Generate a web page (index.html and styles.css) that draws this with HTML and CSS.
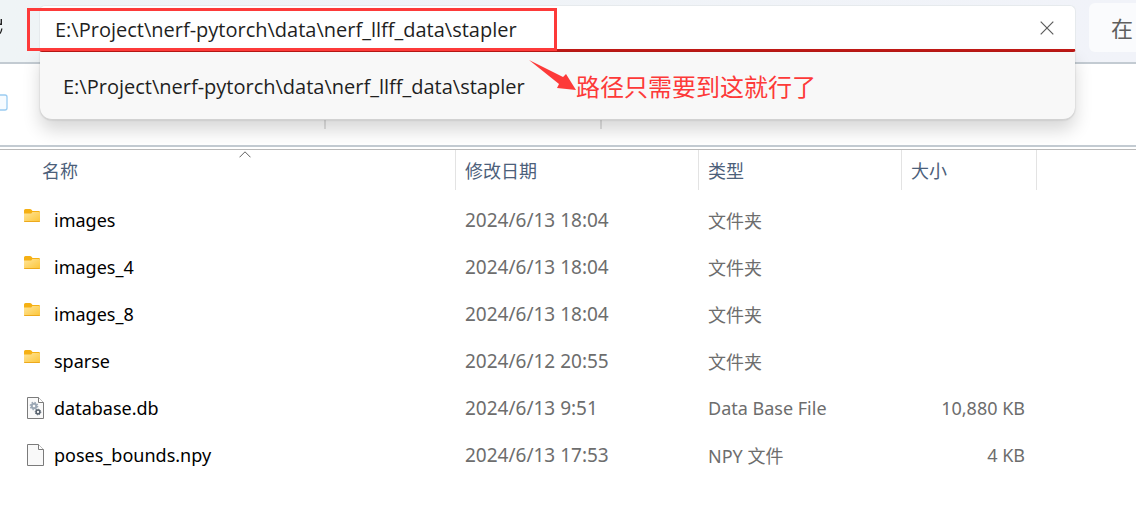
FILE: index.html
```
<!DOCTYPE html>
<html lang="zh-CN">
<head>
  <meta charset="UTF-8" />
  <meta name="viewport" content="width=device-width, initial-scale=1.0">
  <title>stapler</title>
  <link rel="stylesheet" href="styles.css">
</head>
<body>

  <!-- icons used by the file rows -->
  <svg class="sprite" aria-hidden="true">
    <defs>
      <linearGradient id="folder-fill" x1="0" y1="0" x2="1" y2="1">
        <stop offset="0" stop-color="#ffe59a" />
        <stop offset="1" stop-color="#fcc537" />
      </linearGradient>
    </defs>
    <symbol id="icon-folder" viewBox="0 0 16 13">
      <path d="M0 1.500Q0 0 1.500 0H6Q6.800 0 7.300 .6L8.500 2H14.800Q16 2 16 3.200V6H0Z" fill="#f5b013" />
      <path d="M0 4.500H6.500Q7.200 4.500 7.700 3.900L8.300 3H15Q16 3 16 4V11.800Q16 13 14.800 13H1.200Q0 13 0 11.800Z" fill="url(#folder-fill)" />
      <path d="M.2 12.500H15.800" stroke="#eda91c" />
    </symbol>
    <symbol id="icon-file" viewBox="0 0 17 22">
      <path d="M.5 .5H11.500L16.500 5.500V21.500H.5Z" fill="#f9f9f9" stroke="#7b7b7b" />
      <path d="M11.500 .5V5.500H16.500" fill="#fff" stroke="#7b7b7b" />
    </symbol>
    <symbol id="icon-db" viewBox="0 0 17 22">
      <use href="#icon-file" width="17" height="22" />
      <circle cx="7" cy="9" r="2.300" fill="none" stroke="#9ba7b4" stroke-width="2" />
      <circle cx="7" cy="9" r="3.600" fill="none" stroke="#9ba7b4" stroke-width="1.500" stroke-dasharray="1.410 1.417" />
      <circle cx="11" cy="15" r="1.900" fill="none" stroke="#56616d" stroke-width="1.500" />
      <circle cx="11" cy="15" r="2.800" fill="none" stroke="#56616d" stroke-width="1" stroke-dasharray="1.100 1.099" />
    </symbol>
  </svg>

  <header class="topbar">
    <button class="refresh" type="button" aria-label="刷新">
      <svg width="3" height="18" viewBox="0 0 3 18">
        <path d="M1.300 1V6.300H0M0 15.500Q1.500 13.500 1.800 10.500" fill="none" stroke="#222" stroke-width="1.400" />
      </svg>
    </button>

    <div class="address">
      <input class="address-input" type="text" aria-label="地址" value="E:\Project\nerf-pytorch\data\nerf_llff_data\stapler">
      <button class="clear" type="button" aria-label="清除">
        <svg width="14" height="14" viewBox="0 0 14 14">
          <path d="M.7 .7L13.300 13.300M13.300 .7L.7 13.300" stroke="#5c5c5c" stroke-width="1.200" />
        </svg>
      </button>
      <div class="suggestions">
        <a class="suggestion" href="#">E:\Project\nerf-pytorch\data\nerf_llff_data\stapler</a>
      </div>
      <div class="mark-box"></div>
      <div class="mark-note">
        <svg class="mark-arrow" width="47" height="31" viewBox="0 0 47 31">
          <path d="M0 0L34 17L37 14L47 30L28 28L30 24Z" fill="#fd3a39" />
        </svg>
        <span>路径只需要到这就行了</span>
      </div>
    </div>

    <input class="search" type="text" aria-label="搜索" placeholder="在">
  </header>

  <div class="toolbar">
    <button class="tool" type="button" aria-label="重命名">
      <svg width="8" height="18" viewBox="0 0 8 18">
        <path d="M0 1H5Q7 1 7 3V14Q7 16 5 16H0" fill="#f6fbff" stroke="#9acbf1" stroke-width="1.300" />
      </svg>
    </button>
    <span class="divider"></span>
    <span class="divider"></span>
  </div>

  <main>
    <table class="files">
      <colgroup>
        <col class="col-name">
        <col class="col-date">
        <col class="col-type">
        <col class="col-size">
        <col>
      </colgroup>
      <thead>
        <tr>
          <th class="name">
            <svg class="sort" width="12" height="7" viewBox="0 0 12 7">
              <path d="M.5 6.300L6 .8L11.500 6.300" fill="none" stroke="#5f5f5f" />
            </svg>
            名称
          </th>
          <th>修改日期</th>
          <th>类型</th>
          <th>大小</th>
          <td></td>
        </tr>
      </thead>
      <tbody>
        <tr>
          <td class="name"><div class="entry"><svg class="folder"><use href="#icon-folder" /></svg>images</div></td>
          <td class="date">2024/6/13 18:04</td>
          <td>文件夹</td>
          <td class="size"></td>
          <td></td>
        </tr>
        <tr>
          <td class="name"><div class="entry"><svg class="folder"><use href="#icon-folder" /></svg>images_4</div></td>
          <td class="date">2024/6/13 18:04</td>
          <td>文件夹</td>
          <td class="size"></td>
          <td></td>
        </tr>
        <tr>
          <td class="name"><div class="entry"><svg class="folder"><use href="#icon-folder" /></svg>images_8</div></td>
          <td class="date">2024/6/13 18:04</td>
          <td>文件夹</td>
          <td class="size"></td>
          <td></td>
        </tr>
        <tr>
          <td class="name"><div class="entry"><svg class="folder"><use href="#icon-folder" /></svg>sparse</div></td>
          <td class="date">2024/6/12 20:55</td>
          <td>文件夹</td>
          <td class="size"></td>
          <td></td>
        </tr>
        <tr>
          <td class="name"><div class="entry"><svg class="file"><use href="#icon-db" /></svg>database.db</div></td>
          <td class="date">2024/6/13 9:51</td>
          <td>Data Base File</td>
          <td class="size">10,880 KB</td>
          <td></td>
        </tr>
        <tr>
          <td class="name"><div class="entry"><svg class="file"><use href="#icon-file" /></svg>poses_bounds.npy</div></td>
          <td class="date">2024/6/13 17:53</td>
          <td>NPY 文件</td>
          <td class="size">4 KB</td>
          <td></td>
        </tr>
      </tbody>
    </table>
  </main>

</body>
</html>
```
FILE: styles.css
```
* {
  box-sizing: border-box;
}

body {
  margin: 0;
  background-color: #fff;
  color: #6d6d6d;
  font-family: "Noto Sans", "Noto Sans CJK SC", sans-serif;
  font-size: 18px;
  overflow-x: hidden;
}

button {
  padding: 0;
  border: none;
  background: none;
}

button svg {
  display: block;
}

.sprite {
  position: absolute;
  width: 0;
  height: 0;
}

/* top bar */
.topbar {
  display: flex;
  align-items: flex-start;
  height: 64px;
  background: linear-gradient(90deg, #eff4f6, #f1f3f9);
  border-bottom: 2px solid #c3cbd2;
}

.refresh {
  width: 39px;
  padding-top: 18px;
}

.address {
  position: relative;
  flex: 1;
  display: flex;
  align-items: center;
  height: 47px;
  margin-top: 5px;
  background-color: #fff;
  border: 1px solid #e6eaed;
  border-bottom: 3px solid #c21a17;
  border-radius: 6px 6px 3px 3px;
}

.address-input {
  flex: 1;
  min-width: 0;
  height: 40px;
  padding: 3px 15px 0;
  border: none;
  outline: none;
  background: none;
  color: #1f1f1f;
  font-family: "Open Sans", "Noto Sans CJK SC", sans-serif;
  font-size: 20px;
}

.clear {
  margin-right: 21px;
}

.suggestions {
  position: absolute;
  top: 100%;
  left: 0;
  right: 0;
  margin-top: 3px;
  padding-top: 3px;
  background-color: #f8f8f8;
  border-bottom: 1px solid #d2d2d2;
  border-radius: 0 0 12px 12px;
  box-shadow: 0 0 2px rgba(0, 0, 0, 0.2), 0 10px 18px rgba(0, 0, 0, 0.16);
}

.suggestion {
  display: block;
  padding: 0 23px;
  color: #1f1f1f;
  font-family: "Open Sans", "Noto Sans CJK SC", sans-serif;
  font-size: 20px;
  line-height: 64px;
  text-decoration: none;
}

.search {
  width: 47px;
  height: 49px;
  margin: 3px 0 0 13px;
  padding: 0 0 0 22px;
  border: none;
  border-radius: 6px 0 0 6px;
  background-color: #fafbfd;
  font-family: inherit;
  font-size: 22px;
}

.search::placeholder {
  color: #5f5f5f;
}

/* red marks over the address bar */
.mark-box {
  position: absolute;
  top: 2px;
  left: -13px;
  width: 530px;
  height: 43px;
  border: 3px solid #fd3a39;
  pointer-events: none;
}

.mark-note {
  position: absolute;
  top: 54px;
  left: 489px;
  display: flex;
  color: #fd3a39;
  font-family: "Noto Sans CJK SC", sans-serif;
  font-size: 24px;
  line-height: 52px;
}

/* toolbar */
.toolbar {
  display: flex;
  align-items: center;
  height: 83px;
  border-bottom: 2px solid #c3cbd2;
}

.tool {
  margin-right: 316px;
  padding-bottom: 3px;
}

.divider {
  width: 2px;
  height: 48px;
  margin-right: 274px;
  background-color: #e2e2e2;
}

/* file list */
main {
  margin-top: 2px;
  border-top: 1px solid #b9b9b9;
}

.files {
  width: 100%;
  table-layout: fixed;
  border-collapse: separate;
  border-spacing: 0;
}

.col-name { width: 456px; }
.col-date { width: 243px; }
.col-type { width: 203px; }
.col-size { width: 135px; }

.files th {
  position: relative;
  height: 40px;
  padding: 0 9px;
  border-right: 1px solid #e3e3e3;
  color: #4c607a;
  font-weight: 400;
  text-align: left;
}

.files th.name {
  padding-left: 42px;
}

.sort {
  position: absolute;
  top: 1px;
  left: 239px;
}

.files tbody::before {
  content: "";
  display: block;
  height: 6px;
}

.files td {
  padding: 0 9px;
}

.files tbody td {
  height: 47px;
}

.files td.name {
  padding-left: 24px;
  color: #000;
}

.files td.date {
  font-size: 19px;
}

.files td.size {
  padding-right: 12px;
  text-align: right;
}

.entry {
  display: flex;
  align-items: center;
}

.folder {
  width: 16px;
  height: 13px;
  margin: 0 14px 8px 0;
}

.file {
  width: 17px;
  height: 22px;
  margin: 0 10px 0 3px;
}
```
